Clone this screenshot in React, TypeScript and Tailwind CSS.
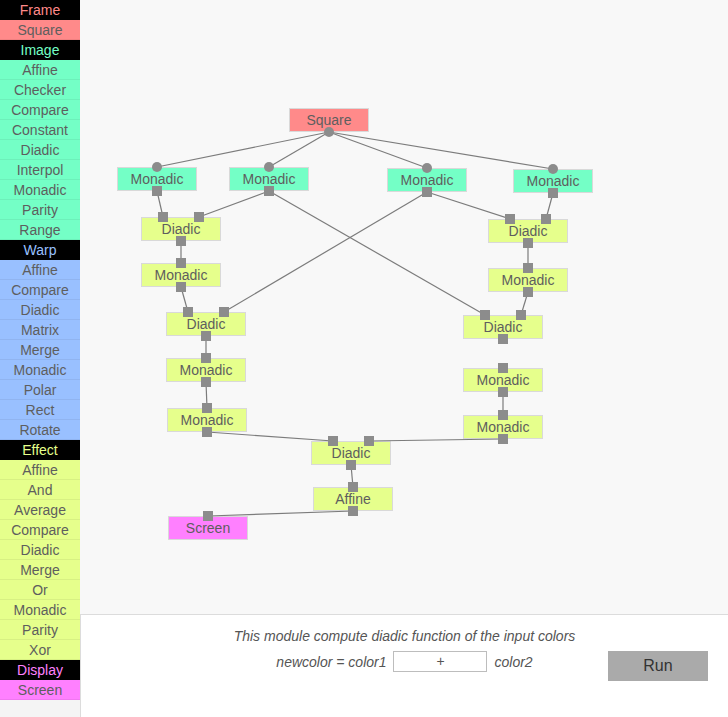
const palette = {
  frame: { bg: "bg-[#ff8a8a]", head: "text-[#ff8a8a]" },
  image: { bg: "bg-[#74ffc6]", head: "text-[#74ffc6]" },
  warp: { bg: "bg-[#99c0ff]", head: "text-[#99c0ff]" },
  effect: { bg: "bg-[#e6ff8c]", head: "text-[#e6ff8c]" },
  display: { bg: "bg-[#ff80ff]", head: "text-[#ff80ff]" },
} as const;

type Group = keyof typeof palette;

const library: { title: string; group: Group; items: string[] }[] = [
  { title: "Frame", group: "frame", items: ["Square"] },
  {
    title: "Image",
    group: "image",
    items: ["Affine", "Checker", "Compare", "Constant", "Diadic", "Interpol", "Monadic", "Parity", "Range"],
  },
  {
    title: "Warp",
    group: "warp",
    items: ["Affine", "Compare", "Diadic", "Matrix", "Merge", "Monadic", "Polar", "Rect", "Rotate"],
  },
  {
    title: "Effect",
    group: "effect",
    items: ["Affine", "And", "Average", "Compare", "Diadic", "Merge", "Or", "Monadic", "Parity", "Xor"],
  },
  { title: "Display", group: "display", items: ["Screen"] },
];

// diagram nodes, page coords of the top-left corner
type Kind = "source" | "mono" | "dia" | "sink";
const nodes: Record<string, { label: string; group: Group; kind: Kind; x: number; y: number }> = {
  sq: { label: "Square", group: "frame", kind: "source", x: 289, y: 108 },
  m1: { label: "Monadic", group: "image", kind: "mono", x: 117, y: 167 },
  m2: { label: "Monadic", group: "image", kind: "mono", x: 229, y: 167 },
  m3: { label: "Monadic", group: "image", kind: "mono", x: 387, y: 168 },
  m4: { label: "Monadic", group: "image", kind: "mono", x: 513, y: 169 },
  d1: { label: "Diadic", group: "effect", kind: "dia", x: 141, y: 217 },
  dr1: { label: "Diadic", group: "effect", kind: "dia", x: 488, y: 219 },
  ml1: { label: "Monadic", group: "effect", kind: "mono", x: 141, y: 263 },
  mr1: { label: "Monadic", group: "effect", kind: "mono", x: 488, y: 268 },
  dl2: { label: "Diadic", group: "effect", kind: "dia", x: 166, y: 312 },
  dr2: { label: "Diadic", group: "effect", kind: "dia", x: 463, y: 315 },
  ml2: { label: "Monadic", group: "effect", kind: "mono", x: 166, y: 358 },
  mr2: { label: "Monadic", group: "effect", kind: "mono", x: 463, y: 368 },
  ml3: { label: "Monadic", group: "effect", kind: "mono", x: 167, y: 408 },
  mr3: { label: "Monadic", group: "effect", kind: "mono", x: 463, y: 415 },
  dc: { label: "Diadic", group: "effect", kind: "dia", x: 311, y: 441 },
  af: { label: "Affine", group: "effect", kind: "mono", x: 313, y: 487 },
  scr: { label: "Screen", group: "display", kind: "sink", x: 168, y: 516 },
};

// from node -> to node, input index
const links: [string, string, number][] = [
  ["sq", "m1", 0],
  ["sq", "m2", 0],
  ["sq", "m3", 0],
  ["sq", "m4", 0],
  ["m1", "d1", 0],
  ["m2", "d1", 1],
  ["m2", "dr2", 0],
  ["m3", "dl2", 1],
  ["m3", "dr1", 0],
  ["m4", "dr1", 1],
  ["d1", "ml1", 0],
  ["ml1", "dl2", 0],
  ["dl2", "ml2", 0],
  ["ml2", "ml3", 0],
  ["ml3", "dc", 0],
  ["dr1", "mr1", 0],
  ["mr1", "dr2", 1],
  ["mr2", "mr3", 0],
  ["mr3", "dc", 1],
  ["dc", "af", 0],
  ["af", "scr", 0],
];

const H = 24;
const OX = 80;

function inputs(id: string) {
  const n = nodes[id];
  if (n.kind === "source") return [];
  if (n.kind === "dia") return [{ x: n.x + 22 - OX, y: n.y }, { x: n.x + 58 - OX, y: n.y }];
  return [{ x: n.x + 40 - OX, y: n.y }];
}

function output(id: string) {
  const n = nodes[id];
  return { x: n.x + 40 - OX, y: n.y + H };
}

function Sidebar() {
  return (
    <aside className="w-20 shrink-0 bg-[#f4f4f4] text-center text-[14px] leading-5">
      {library.map((sec) => (
        <div key={sec.title}>
          <div className={`h-5 bg-black ${palette[sec.group].head}`}>{sec.title}</div>
          {sec.items.map((item) => (
            <div
              key={item}
              className={`h-5 border-b border-black/[0.06] leading-5 text-[#5e5e5e] ${palette[sec.group].bg}`}
            >
              {item}
            </div>
          ))}
        </div>
      ))}
    </aside>
  );
}

function Diagram() {
  return (
    <div className="relative h-[614px] bg-[#f8f8f8]">
      {Object.entries(nodes).map(([id, n]) => (
        <div
          key={id}
          className={`absolute h-6 w-20 border border-[#d9d9d9] text-center text-[14px] leading-[22px] text-[#5e5e5e] ${palette[n.group].bg}`}
          style={{ left: n.x - OX, top: n.y }}
        >
          {n.label}
        </div>
      ))}
      <svg className="pointer-events-none absolute inset-0 h-full w-full">
        {links.map(([a, b, i]) => {
          const p = output(a);
          const q = inputs(b)[i];
          return (
            <line key={`${a}-${b}-${i}`} x1={p.x} y1={p.y} x2={q.x} y2={q.y} stroke="#7c7c7c" strokeWidth={1.2} />
          );
        })}
        {Object.entries(nodes).map(([id, n]) => {
          const ins = inputs(id).map((p) => ({ ...p, round: n.group === "image" }));
          const outs = n.kind === "sink" ? [] : [{ ...output(id), round: n.kind === "source" }];
          return [...ins, ...outs].map((p, k) =>
            p.round ? (
              <circle key={`${id}-${k}`} cx={p.x} cy={p.y} r={5} fill="#8c8c8c" />
            ) : (
              <rect key={`${id}-${k}`} x={p.x - 5} y={p.y - 5} width={10} height={10} fill="#8c8c8c" />
            ),
          );
        })}
      </svg>
    </div>
  );
}

export default function App() {
  return (
    <div className="flex h-[717px] w-full overflow-hidden bg-white font-['Liberation_Sans',Arial,sans-serif]">
      <Sidebar />
      <div className="flex min-w-0 flex-1 flex-col">
        <Diagram />
        <div className="grid flex-1 grid-cols-[120px_1fr_120px] border-l border-t border-[#dcdcdc] bg-white">
          <div />
          <div className="flex flex-col items-center pt-[11px] text-[14px] italic leading-5 text-[#555]">
            <p>This module compute diadic function of the input colors</p>
            <div className="mt-[5px] flex items-center">
              <span>newcolor = color1</span>
              <div className="mx-[7px] h-[21px] w-[94px] border border-[#bdbdbd] text-center not-italic leading-[19px]">
                +
              </div>
              <span>color2</span>
            </div>
          </div>
          <div className="pt-[36px]">
            <button className="h-[30px] w-[100px] bg-[#aaaaaa] text-[16px] text-[#333]">Run</button>
          </div>
        </div>
      </div>
    </div>
  );
}
